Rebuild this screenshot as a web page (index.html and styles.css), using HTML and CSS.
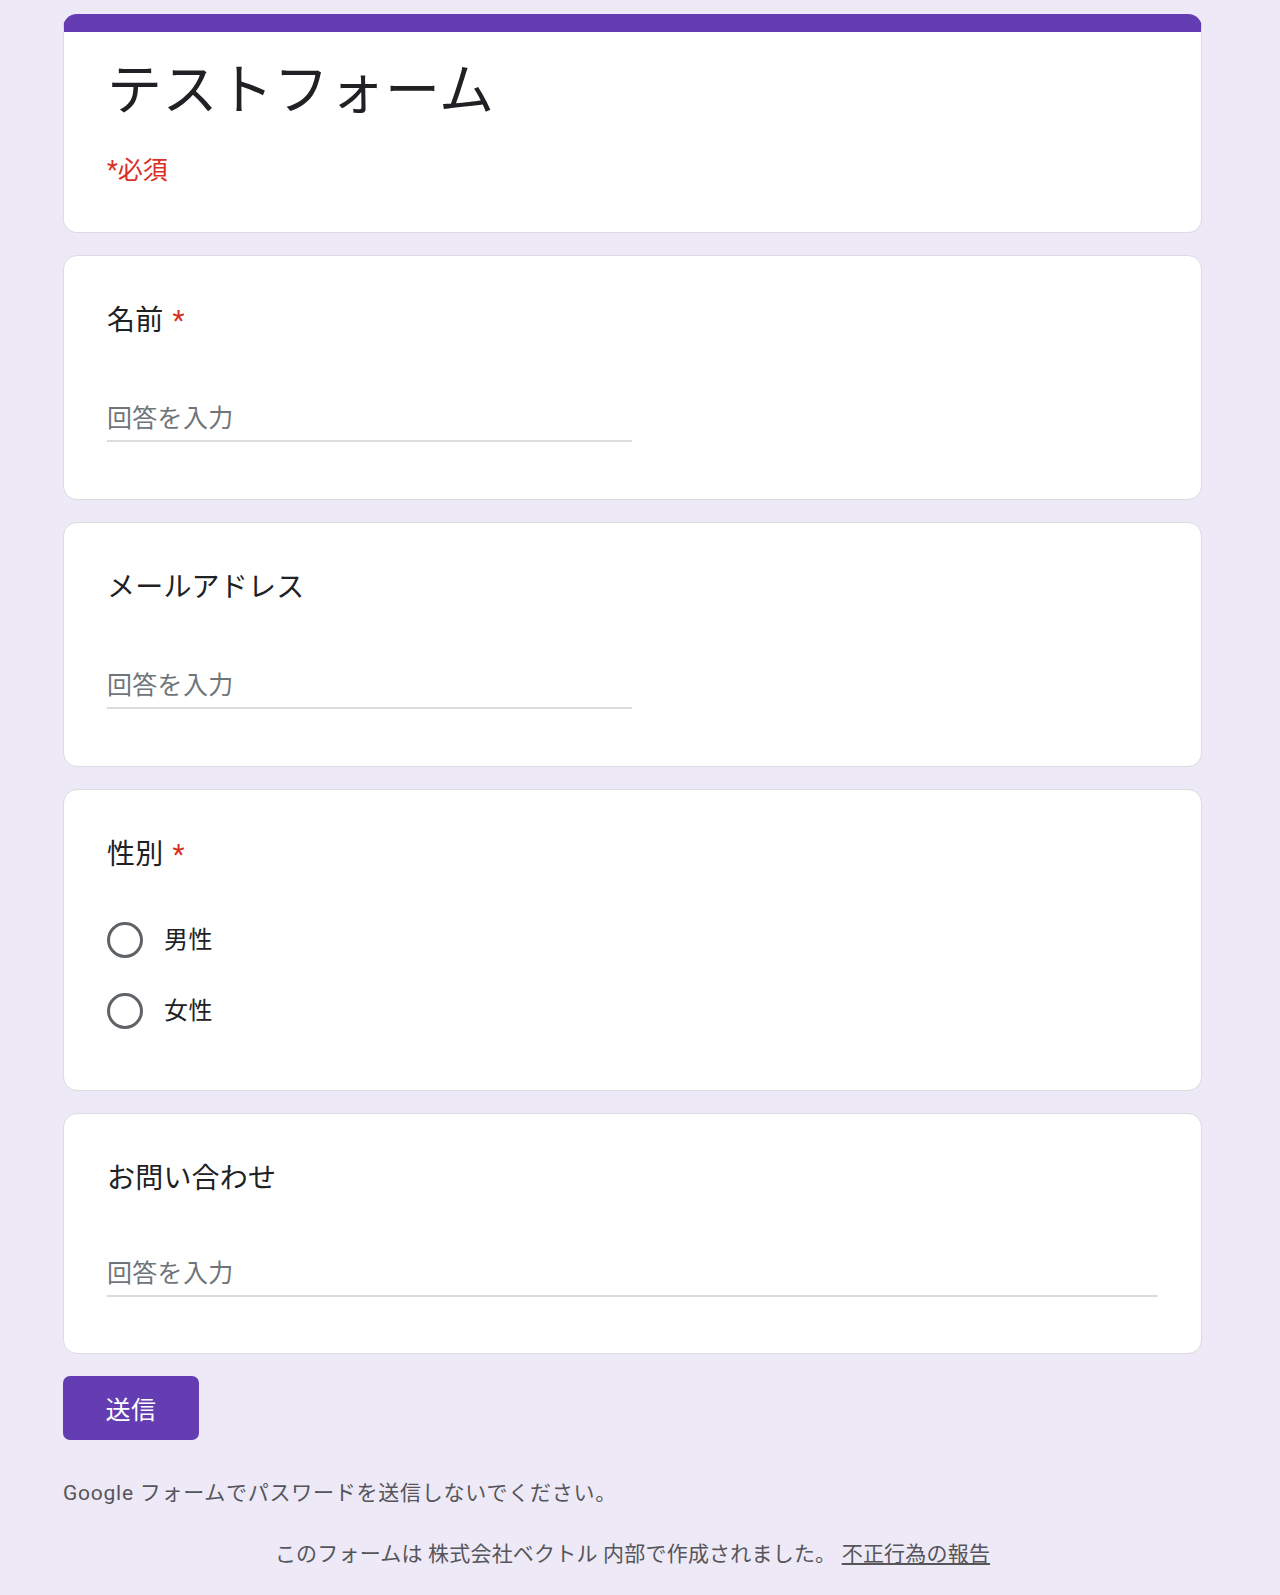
FILE: index.html
```html
<!DOCTYPE html>
<html lang="ja">
<head>
<meta charset="utf-8">
<title>テストフォーム</title>
<link rel="stylesheet" href="styles.css">
</head>
<body>
<div class="page">
  <main class="form">
    <section class="card card-head">
      <h1 class="form-title">テストフォーム</h1>
      <div class="required-note">*必須</div>
    </section>

    <section class="card question">
      <div class="q-title">名前<span class="req">*</span></div>
      <div class="answer half"><span class="placeholder">回答を入力</span></div>
    </section>

    <section class="card question">
      <div class="q-title">メールアドレス</div>
      <div class="answer half"><span class="placeholder">回答を入力</span></div>
    </section>

    <section class="card question question-choice">
      <div class="q-title">性別<span class="req">*</span></div>
      <div class="options">
        <label class="option"><span class="radio"></span><span class="opt-label">男性</span></label>
        <label class="option"><span class="radio"></span><span class="opt-label">女性</span></label>
      </div>
    </section>

    <section class="card question question-long">
      <div class="q-title">お問い合わせ</div>
      <div class="answer full"><span class="placeholder">回答を入力</span></div>
    </section>

    <div class="actions">
      <button class="submit" type="button">送信</button>
    </div>

    <p class="notice">Google フォームでパスワードを送信しないでください。</p>
    <p class="owner">このフォームは 株式会社ベクトル 内部で作成されました。 <a class="abuse" href="#">不正行為の報告</a></p>
  </main>
</div>
</body>
</html>
```

FILE: styles.css
```css
* { box-sizing: border-box; }

html, body {
  margin: 0;
  padding: 0;
  background: #ede9f6;
}

body {
  font-family: Roboto, "Noto Sans CJK JP", sans-serif;
  color: #202124;
}

.page {
  width: 1265px;
  padding-top: 14px;
  padding-bottom: 20px;
}

.form {
  width: 1139px;
  margin: 0 auto;
  display: flex;
  flex-direction: column;
}

.card {
  background: #fff;
  border: 1px solid #dadce0;
  border-radius: 14px;
  padding: 43px;
  margin-bottom: 22px;
}

.card-head {
  border-top: 18px solid #643db3;
  padding-top: 23px;
  padding-bottom: 43px;
}

.form-title {
  margin: 0;
  font-size: 55px;
  line-height: 71px;
  font-weight: 400;
  letter-spacing: 0.6px;
}

.required-note {
  margin-top: 27px;
  font-size: 25px;
  line-height: 36px;
  color: #d93025;
}

.question {
  height: 245px;
}

.q-title {
  font-size: 28px;
  line-height: 43px;
  font-weight: 400;
  letter-spacing: 0.2px;
}

.req {
  color: #d93025;
  margin-left: 9px;
}

.answer {
  margin-top: 55px;
  height: 45px;
  border-bottom: 2px solid #dadce0;
  display: flex;
  align-items: center;
}

.answer.half { width: 525px; }
.answer.full { width: 100%; }

.placeholder {
  font-size: 25px;
  line-height: 43px;
  color: #70757a;
  letter-spacing: 0.3px;
}

.question-long {
  height: 241px;
}

.question-long .answer {
  margin-top: 52px;
}

.question-choice {
  height: 302px;
}

.options {
  margin-top: 28px;
  display: flex;
  flex-direction: column;
}

.option {
  height: 71px;
  display: flex;
  align-items: center;
  gap: 21px;
}

.radio {
  width: 36px;
  height: 36px;
  border: 3.5px solid #5f6368;
  border-radius: 50%;
  flex: none;
}

.opt-label {
  font-size: 24px;
  line-height: 36px;
  letter-spacing: 0.5px;
  color: #202124;
}

.actions {
  margin-top: 0;
  display: flex;
}

.submit {
  width: 136px;
  height: 64px;
  border: none;
  border-radius: 7px;
  background: #643db3;
  color: #fff;
  font-family: Roboto, "Noto Sans CJK JP", sans-serif;
  font-size: 25px;
  letter-spacing: 0.4px;
  padding: 0;
}

.notice {
  margin: 37px 0 0 0;
  font-size: 21px;
  line-height: 32px;
  color: #56555a;
  letter-spacing: 0.75px;
}

.owner {
  margin: 29px 0 0 0;
  font-size: 21px;
  line-height: 32px;
  color: #56555a;
  text-align: center;
  letter-spacing: 0.2px;
}

.abuse {
  color: #56555a;
  text-decoration: underline;
}
```
